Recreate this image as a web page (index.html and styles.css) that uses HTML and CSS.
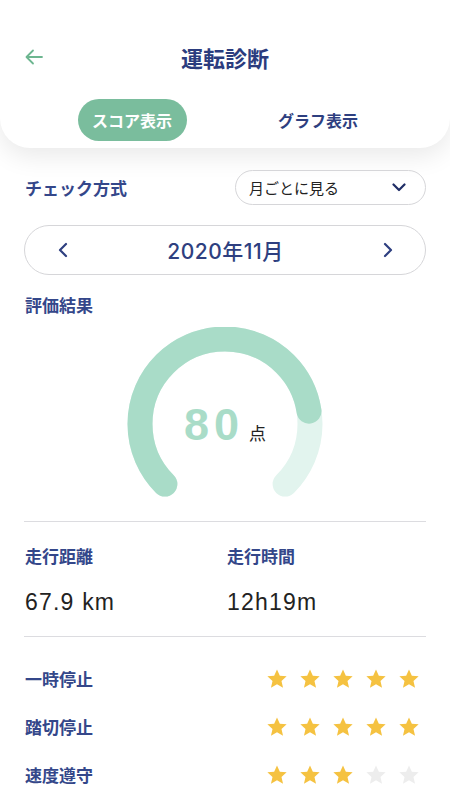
FILE: index.html
```html
<!DOCTYPE html>
<html lang="ja">
<head>
    <meta charset="UTF-8">
    <meta name="viewport" content="width=device-width, initial-scale=1.0">
    <title>運転診断</title>
    <link rel="stylesheet" href="styles.css">
</head>
<body>
    <header class="top">
        <div class="title-row">
            <a href="#" class="back">
                <svg width="18" height="16" viewBox="0 0 18 16"><path d="M17 8H2M8 1.5L1.5 8 8 14.5" fill="none" stroke="#6db690" stroke-width="1.8" stroke-linecap="round" stroke-linejoin="round"/></svg>
            </a>
            <h1>運転診断</h1>
        </div>
        <nav class="tabs">
            <div class="tab"><span class="active">スコア表示</span></div>
            <div class="tab"><span>グラフ表示</span></div>
        </nav>
    </header>

    <div class="container">
        <div class="check-row">
            <span class="label">チェック方式</span>
            <div class="select">
                <span>月ごとに見る</span>
                <svg width="14" height="9" viewBox="0 0 14 9"><path d="M1.5 1.5L7 7l5.5-5.5" fill="none" stroke="#1f2d66" stroke-width="2.2" stroke-linecap="round" stroke-linejoin="round"/></svg>
            </div>
        </div>

        <div class="month">
            <svg width="10" height="16" viewBox="0 0 10 16"><path d="M8 2L2 8l6 6" fill="none" stroke="#2e3f80" stroke-width="2.2" stroke-linecap="round" stroke-linejoin="round"/></svg>
            <span>2020年11月</span>
            <svg width="10" height="16" viewBox="0 0 10 16"><path d="M2 2l6 6-6 6" fill="none" stroke="#2e3f80" stroke-width="2.2" stroke-linecap="round" stroke-linejoin="round"/></svg>
        </div>

        <h2 class="label result">評価結果</h2>

        <div class="gauge">
            <svg width="220" height="175" viewBox="0 0 220 175">
                <path d="M49.9 157.1A85 85 0 1 1 170.1 157.1" fill="none" stroke="#e2f4ee" stroke-width="25" stroke-linecap="round"/>
                <path d="M49.9 157.1A85 85 0 1 1 170.1 157.1" fill="none" stroke="#a9dcc8" stroke-width="25" stroke-linecap="round" stroke-dasharray="320.4 1000"/>
            </svg>
            <div class="score"><span class="num">80</span><span class="unit">点</span></div>
        </div>

        <div class="stats">
            <div class="stat">
                <span class="label">走行距離</span>
                <span class="value">67.9 km</span>
            </div>
            <div class="stat">
                <span class="label">走行時間</span>
                <span class="value">12h19m</span>
            </div>
        </div>

        <ul class="ratings">
            <li>
                <span class="label">一時停止</span>
                <div class="stars">
                    <svg viewBox="0 0 24 24"><path class="on" d="M12 1.5l3.1 7 7.4.6-5.6 5 1.7 7.4L12 17.6l-6.6 3.9 1.7-7.4-5.6-5 7.4-.6z"/></svg>
                    <svg viewBox="0 0 24 24"><path class="on" d="M12 1.5l3.1 7 7.4.6-5.6 5 1.7 7.4L12 17.6l-6.6 3.9 1.7-7.4-5.6-5 7.4-.6z"/></svg>
                    <svg viewBox="0 0 24 24"><path class="on" d="M12 1.5l3.1 7 7.4.6-5.6 5 1.7 7.4L12 17.6l-6.6 3.9 1.7-7.4-5.6-5 7.4-.6z"/></svg>
                    <svg viewBox="0 0 24 24"><path class="on" d="M12 1.5l3.1 7 7.4.6-5.6 5 1.7 7.4L12 17.6l-6.6 3.9 1.7-7.4-5.6-5 7.4-.6z"/></svg>
                    <svg viewBox="0 0 24 24"><path class="on" d="M12 1.5l3.1 7 7.4.6-5.6 5 1.7 7.4L12 17.6l-6.6 3.9 1.7-7.4-5.6-5 7.4-.6z"/></svg>
                </div>
            </li>
            <li>
                <span class="label">踏切停止</span>
                <div class="stars">
                    <svg viewBox="0 0 24 24"><path class="on" d="M12 1.5l3.1 7 7.4.6-5.6 5 1.7 7.4L12 17.6l-6.6 3.9 1.7-7.4-5.6-5 7.4-.6z"/></svg>
                    <svg viewBox="0 0 24 24"><path class="on" d="M12 1.5l3.1 7 7.4.6-5.6 5 1.7 7.4L12 17.6l-6.6 3.9 1.7-7.4-5.6-5 7.4-.6z"/></svg>
                    <svg viewBox="0 0 24 24"><path class="on" d="M12 1.5l3.1 7 7.4.6-5.6 5 1.7 7.4L12 17.6l-6.6 3.9 1.7-7.4-5.6-5 7.4-.6z"/></svg>
                    <svg viewBox="0 0 24 24"><path class="on" d="M12 1.5l3.1 7 7.4.6-5.6 5 1.7 7.4L12 17.6l-6.6 3.9 1.7-7.4-5.6-5 7.4-.6z"/></svg>
                    <svg viewBox="0 0 24 24"><path class="on" d="M12 1.5l3.1 7 7.4.6-5.6 5 1.7 7.4L12 17.6l-6.6 3.9 1.7-7.4-5.6-5 7.4-.6z"/></svg>
                </div>
            </li>
            <li>
                <span class="label">速度遵守</span>
                <div class="stars">
                    <svg viewBox="0 0 24 24"><path class="on" d="M12 1.5l3.1 7 7.4.6-5.6 5 1.7 7.4L12 17.6l-6.6 3.9 1.7-7.4-5.6-5 7.4-.6z"/></svg>
                    <svg viewBox="0 0 24 24"><path class="on" d="M12 1.5l3.1 7 7.4.6-5.6 5 1.7 7.4L12 17.6l-6.6 3.9 1.7-7.4-5.6-5 7.4-.6z"/></svg>
                    <svg viewBox="0 0 24 24"><path class="on" d="M12 1.5l3.1 7 7.4.6-5.6 5 1.7 7.4L12 17.6l-6.6 3.9 1.7-7.4-5.6-5 7.4-.6z"/></svg>
                    <svg viewBox="0 0 24 24"><path class="off" d="M12 1.5l3.1 7 7.4.6-5.6 5 1.7 7.4L12 17.6l-6.6 3.9 1.7-7.4-5.6-5 7.4-.6z"/></svg>
                    <svg viewBox="0 0 24 24"><path class="off" d="M12 1.5l3.1 7 7.4.6-5.6 5 1.7 7.4L12 17.6l-6.6 3.9 1.7-7.4-5.6-5 7.4-.6z"/></svg>
                </div>
            </li>
        </ul>
    </div>
</body>
</html>
```

FILE: styles.css
```css
* {
    margin: 0;
    padding: 0;
    box-sizing: border-box;
}

body {
    font-family: "Noto Sans CJK JP", "Noto Sans", sans-serif;
    color: #222;
    background-color: #ffffff;
    width: 450px;
    overflow: hidden;
}

.top {
    background-color: #ffffff;
    height: 148px;
    padding-top: 43px;
    border-radius: 0 0 30px 30px;
    box-shadow: 0 8px 26px rgba(0, 0, 0, 0.09);
}

.title-row {
    position: relative;
    height: 28px;
    display: flex;
    align-items: center;
    justify-content: center;
}

.back {
    position: absolute;
    left: 25px;
    top: 6px;
    display: flex;
}

.title-row h1 {
    font-size: 22px;
    font-weight: bold;
    line-height: 28px;
    color: #2b3c7e;
}

.tabs {
    display: grid;
    grid-template-columns: 186px 186px;
    justify-content: center;
    margin-top: 28px;
}

.tab {
    display: flex;
    justify-content: center;
}

.tab span {
    width: 109px;
    height: 42px;
    border-radius: 21px;
    display: flex;
    align-items: center;
    justify-content: center;
    font-size: 16px;
    font-weight: bold;
    color: #2e3f80;
}

.tab span.active {
    background-color: #7abd9d;
    color: #ffffff;
}

.container {
    padding: 0 24px;
}

.label {
    font-size: 17px;
    font-weight: bold;
    color: #34478a;
    line-height: 22px;
}

.check-row {
    margin-top: 22px;
    display: flex;
    justify-content: space-between;
    align-items: center;
}

.check-row .label {
    padding-left: 1px;
}

.select {
    width: 191px;
    height: 35px;
    border: 1px solid #d6d6d9;
    border-radius: 18px;
    display: flex;
    align-items: center;
    justify-content: space-between;
    padding: 0 19px 0 13px;
    font-size: 15px;
    color: #222;
}

.month {
    margin-top: 20px;
    height: 50px;
    border: 1px solid #d6d6d9;
    border-radius: 25px;
    display: flex;
    align-items: center;
    justify-content: space-between;
    padding: 0 32px 0 33px;
}

.month span {
    font-family: Inter, "Noto Sans CJK JP", sans-serif;
    font-size: 21px;
    font-weight: 500;
    letter-spacing: 0.5px;
    color: #2e3f80;
}

.result {
    margin-top: 19px;
    padding-left: 1px;
}

.gauge {
    position: relative;
    margin-top: 11px;
    height: 175px;
    display: flex;
    justify-content: center;
}

.score {
    position: absolute;
    top: 72px;
    left: 0;
    right: 0;
    display: flex;
    justify-content: center;
    align-items: baseline;
    gap: 5px;
}

.score .num {
    font-family: "Liberation Sans", Arial, sans-serif;
    font-size: 45px;
    font-weight: bold;
    color: #a9dcc8;
    letter-spacing: 5px;
}

.score .unit {
    font-size: 17px;
    color: #222;
}

.stats {
    margin-top: 19px;
    border-top: 1px solid #dcdce0;
    border-bottom: 1px solid #dcdce0;
    display: grid;
    grid-template-columns: 202px 1fr;
    padding: 23px 0 21px 1px;
}

.stat {
    display: flex;
    flex-direction: column;
    gap: 22px;
}

.value {
    font-family: "Liberation Sans", Arial, sans-serif;
    font-size: 23px;
    line-height: 26px;
    letter-spacing: 1.2px;
    color: #222;
}

.ratings {
    list-style: none;
    padding-top: 18px;
}

.ratings li {
    height: 48px;
    display: flex;
    align-items: center;
    justify-content: space-between;
    padding-left: 1px;
}

.stars {
    display: flex;
    gap: 11px;
    padding-right: 6px;
}

.stars svg {
    width: 22px;
    height: 22px;
}

.stars .on {
    fill: #f5c241;
}

.stars .off {
    fill: #ededed;
}
```
